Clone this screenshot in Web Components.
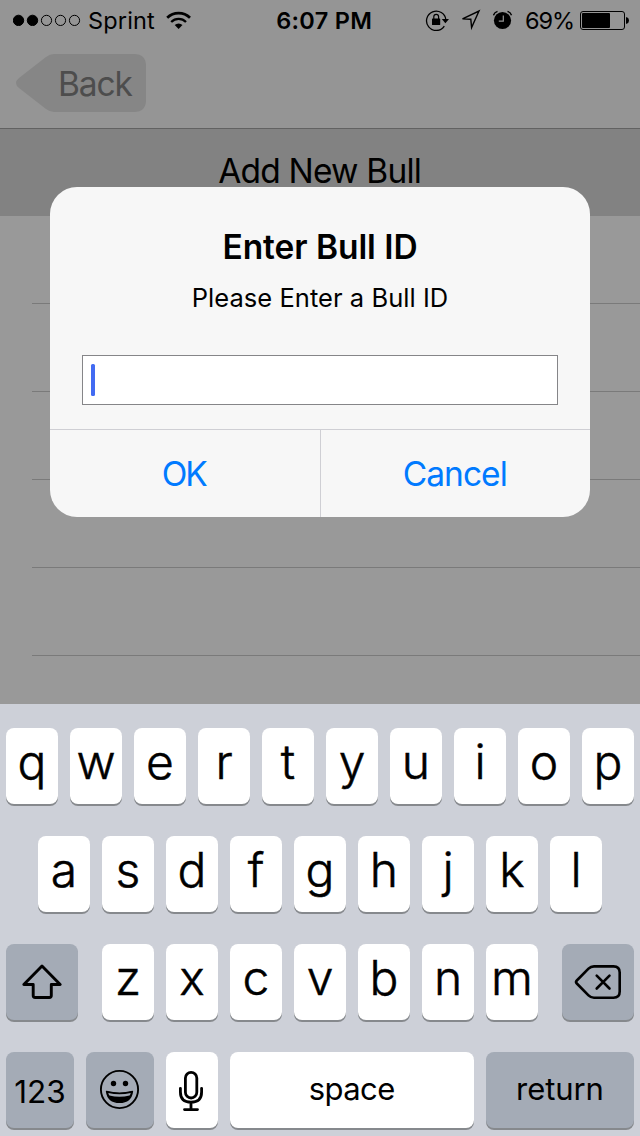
<!DOCTYPE html>
<html lang="en">
<head>
<meta charset="utf-8">
<title>Add New Bull</title>
<style>
html,body{margin:0;padding:0;background:#999}
body{width:640px;height:1136px;overflow:hidden;font-family:Inter,"Liberation Sans",sans-serif;color:#000}
</style>
</head>
<body>
<phone-screen></phone-screen>
<script>
const define = (name, html, setup) => customElements.define(name, class extends HTMLElement {
  connectedCallback() {
    if (this.shadowRoot) return;
    const root = this.attachShadow({mode: 'open'});
    const t = document.createElement('template');
    t.innerHTML = html;
    root.append(t.content.cloneNode(true));
    if (setup) setup(this, root);
  }
});
const ctx = document.createElement('canvas').getContext('2d');

// One line of text, tracked so that its glyphs span the requested width.
define('fit-text', `<style>
  :host{display:block;flex:none;white-space:nowrap;line-height:1.2}
  span{display:block}
</style><span><slot></slot></span>`, (el, root) => {
  const text = el.textContent, size = el.getAttribute('size'), weight = el.getAttribute('weight') || 400;
  const width = +el.getAttribute('width');
  el.style.fontSize = size + 'px';
  el.style.fontWeight = weight;
  if (!width || text.length < 2) return;
  ctx.font = `${weight} ${size}px Inter, "Liberation Sans", sans-serif`;
  const m = ctx.measureText(text);
  const gap = (width - m.actualBoundingBoxLeft - m.actualBoundingBoxRight) / (text.length - 1);
  el.style.letterSpacing = gap.toFixed(3) + 'px';
  root.querySelector('span').style.marginRight = (-gap).toFixed(3) + 'px';
});

define('signal-dots', `<style>:host{display:block;width:68px;height:12px}svg{display:block}</style>
<svg width="68" height="12"><g stroke="#000" stroke-width="1"><circle cx="5.500" cy="6.400" r="5.200"/><circle cx="19.500" cy="6.400" r="5.200"/><g fill="none"><circle cx="33.500" cy="6.400" r="5.100"/><circle cx="47.500" cy="6.400" r="5.100"/><circle cx="61.500" cy="6.400" r="5.100"/></g></g></svg>`);

define('wifi-icon', `<style>:host,svg{display:block}</style>
<svg width="26" height="20" viewBox="166 10 26 20"><path d="M178.600 29l-3.900-3.900a5.600 5.600 0 0 1 7.800 0z"/><g fill="none" stroke="#000"><path stroke-width="2.300" d="M171.200 22a10.500 10.500 0 0 1 14.800 0"/><path stroke-width="2.700" d="M167.200 17.800a16.200 16.200 0 0 1 22.800 0"/></g></svg>`);

define('lock-icon', `<style>:host,svg{display:block}</style>
<svg width="24" height="22" viewBox="424 9 24 22"><path d="M443.300 26.200A9.700 9.700 0 1 1 444.900 20" fill="none" stroke="#000" stroke-width="1.300"/><path d="M440.800 19.100h7.200l-3.600 4.200z"/><rect x="431" y="18.500" width="8.200" height="6.500" rx=".6"/><path d="M432.800 19v-2.200a2.400 2.400 0 0 1 4.800 0v2.200" fill="none" stroke="#000" stroke-width="1.200"/></svg>`);

define('location-icon', `<style>:host,svg{display:block}</style>
<svg width="21" height="22" viewBox="460 9 21 22"><path d="M462.500 18.900L479 11L471.600 27.500L470.800 19.200z" fill="none" stroke="#000" stroke-width="1.400" stroke-linejoin="miter"/></svg>`);

define('alarm-icon', `<style>:host,svg{display:block}</style>
<svg width="20" height="20" viewBox="493 10 20 20"><circle cx="502.500" cy="20.500" r="8.600"/><path d="M503.300 15.500v5.600h-4.500" fill="none" stroke="#959595" stroke-width="1.200"/><path d="M493.500 15.300q.8-3 4-4M511.500 15.300q-.8-3-4-4" fill="none" stroke="#000" stroke-width="1.400"/></svg>`);

define('battery-icon', `<style>:host,svg{display:block}</style>
<svg width="50" height="20" viewBox="580 10 50 20"><rect x="580.500" y="11.500" width="44" height="18" rx="2.500" fill="none" stroke="#000"/><rect x="582" y="13" width="28" height="15" rx="1"/><path d="M626 17.200h1q2 1 2 3.300t-2 3.300h-1z"/></svg>`);

define('status-bar', `<style>
  :host{display:flex;height:40px;align-items:center;padding:0 10px 0 13px;box-sizing:border-box}
  fit-text{padding-top:2px}
  .time{margin-left:84.500px}
  wifi-icon{margin-left:11px}
  signal-dots{margin-right:7px}
  lock-icon{margin-left:auto}
  location-icon{margin-left:11px}
  alarm-icon{margin:0 12px}
  battery-icon{margin-left:5px}
</style>
<signal-dots></signal-dots><fit-text size="23.500" width="66">Sprint</fit-text><wifi-icon></wifi-icon>
<fit-text class="time" size="23.500" weight="600" width="93">6:07 PM</fit-text>
<lock-icon></lock-icon><location-icon></location-icon><alarm-icon></alarm-icon><fit-text size="23.500" width="47">69%</fit-text><battery-icon></battery-icon>`);

define('back-button', `<style>
  :host{display:grid;width:130px;height:58px;color:#4d4d4d}
  svg,.label{grid-area:1/1}
  .label{padding:10px 0 0 42px}
</style>
<svg width="130" height="58"><path fill="#868686" d="M38 0H118Q130 0 130 12V46Q130 58 118 58H38Q34 58 30 55L3 34Q-3 29 3 24L30 3Q34 0 38 0Z"/></svg>
<div class="label"><fit-text size="33.500" width="72.500">Back</fit-text></div>`);

define('nav-bar', `<style>
  :host{display:block;height:129px;box-sizing:border-box;background:#959595;border-bottom:1px solid #626262}
  back-button{margin:14px 0 0 16px}
</style><status-bar></status-bar><back-button></back-button>`);

define('list-row', `<style>
  :host{display:block;height:88px;box-sizing:border-box;padding-left:32px}
  div{height:100%;box-sizing:border-box;border-bottom:1px solid #7a7a7a}
</style><div></div>`);

define('bull-list', `<style>
  :host{display:block}
  header{height:87px;display:flex;align-items:center;justify-content:center;background:#828282;padding-bottom:2px;box-sizing:border-box}
</style><header><fit-text size="33.500" width="201.500">Add New Bull</fit-text></header>
<list-row></list-row><list-row></list-row><list-row></list-row><list-row></list-row><list-row></list-row>`);

define('alert-button', `<style>
  :host{display:flex;flex:1;height:87px;align-items:center;justify-content:center;color:#007aff;padding-top:1px;box-sizing:border-box}
</style><slot></slot>`);

define('text-input', `<style>
  :host{display:flex;align-items:center;box-sizing:border-box;width:476px;height:50px;padding-left:8px;background:#fff;border:1px solid #858588}
  i{width:4px;height:32px;border-radius:1.500px;background:#426bf2}
</style><i></i>`);

define('alert-dialog', `<style>
  :host{display:flex;flex-direction:column;align-items:center;width:540px;height:330px;box-sizing:border-box;background:#f7f7f7;border-radius:27px;overflow:hidden}
  .title{margin-top:40px}
  .message{margin-top:16px}
  text-input{margin-top:auto}
  footer{display:flex;width:100%;margin-top:24px;border-top:1px solid #cfcfd4}
  alert-button+alert-button{border-left:1px solid #cfcfd4}
</style>
<fit-text class="title" size="33.500" weight="600" width="192">Enter Bull ID</fit-text>
<fit-text class="message" size="25.500" width="253">Please Enter a Bull ID</fit-text>
<text-input></text-input>
<footer><alert-button><fit-text size="33.500" width="44.500">OK</fit-text></alert-button><alert-button><fit-text size="33.500" width="102">Cancel</fit-text></alert-button></footer>`);

define('key-cap', `<style>
  :host{display:flex;flex:none;width:52px;height:76px;align-items:center;justify-content:center;background:#fff;border-radius:8px;box-shadow:0 2px 0 #86898d;box-sizing:border-box;font-size:48px;font-weight:300;-webkit-text-stroke:.5px #000;padding-bottom:9px;line-height:1.200}
  :host([kind]){padding-bottom:0;-webkit-text-stroke:0}
  :host([kind="dark"]){background:#a4abb6}
</style><slot></slot>`);

define('key-board', `<style>
  :host{display:flex;flex-direction:column;gap:32px;height:432px;box-sizing:border-box;padding:24px 6px 0;background:#cdd0d8}
  .row{display:flex;gap:12px;justify-content:center;height:76px}
  .wide{width:72px}.shift{margin-right:12px}.del{margin-left:12px}
  .mid{width:68px}.space{width:244px;padding-bottom:3px}.return{width:148px;padding-bottom:3px}
  .num{padding-top:3px}
  svg{display:block;flex:none}
</style>
<div class="row">${[...'qwertyuiop'].map(c => `<key-cap>${c}</key-cap>`).join('')}</div>
<div class="row">${[...'asdfghjkl'].map(c => `<key-cap>${c}</key-cap>`).join('')}</div>
<div class="row"><key-cap kind="dark" class="wide shift"><svg width="72" height="76" viewBox="6 944 72 76"><path d="M42 966L60.200 984.500H51.300V995.500Q51.300 997.500 49.300 997.500H35.200Q33.200 997.500 33.200 995.500V984.500H23.800Z" fill="none" stroke="#000" stroke-width="2.900" stroke-linejoin="round"/></svg></key-cap>${[...'zxcvbnm'].map(c => `<key-cap>${c}</key-cap>`).join('')}<key-cap kind="dark" class="wide del"><svg width="72" height="76" viewBox="562 944 72 76"><g fill="none" stroke="#000" stroke-width="2.600" stroke-linecap="round" stroke-linejoin="round"><path d="M576.800 980.500L588.500 968.700Q590.800 966.400 594 966.400H613.500Q619.700 966.400 619.700 972.600V991.500Q619.700 997.700 613.500 997.700H594Q590.800 997.700 588.500 995.400L576.800 983.500Q575.300 982 576.800 980.500Z"/><path d="M596.700 975.700L609.500 988.500M609.500 975.700L596.700 988.500"/></g></svg></key-cap></div>
<div class="row"><key-cap kind="dark" class="mid num"><fit-text size="31.500" width="49">123</fit-text></key-cap><key-cap kind="dark" class="mid"><svg width="68" height="76" viewBox="86 1052 68 76"><circle cx="119.500" cy="1089.500" r="18.600" fill="none" stroke="#000" stroke-width="1.900"/><circle cx="113.500" cy="1083.500" r="2.700"/><circle cx="125.500" cy="1083.500" r="2.700"/><path d="M106.500 1091.300Q119.500 1094.800 132.500 1091.300Q131 1102.300 119.500 1102.300Q108 1102.300 106.500 1091.300Z" stroke="#000" stroke-width="1.300" stroke-linejoin="round"/><path d="M108.300 1092.900Q119.500 1095.700 130.700 1092.900Q130.300 1094.600 129.600 1095.600Q119.500 1098 109.400 1095.600Q108.700 1094.600 108.300 1092.900Z" fill="#a4abb6"/></svg></key-cap><key-cap kind="light"><svg width="52" height="76" viewBox="166 1052 52 76"><g fill="none" stroke="#000" stroke-width="2.800" stroke-linecap="round"><rect x="185.400" y="1072.400" width="11.400" height="25.600" rx="5.700"/><path d="M180.400 1088.300V1092Q180.400 1102.200 191 1102.200Q201.600 1102.200 201.600 1092V1088.300M191 1102.200V1109.600M184.500 1109.600H197.500"/></g></svg></key-cap><key-cap kind="light" class="space"><fit-text size="31" width="84.500">space</fit-text></key-cap><key-cap kind="dark" class="return"><fit-text size="31" width="83.500">return</fit-text></key-cap></div>`);

define('phone-screen', `<style>
  :host{display:flex;flex-direction:column;position:relative;width:640px;height:1136px;background:#999;overflow:hidden}
  key-board{margin-top:auto}
  alert-dialog{position:absolute;left:50px;top:187px}
</style><nav-bar></nav-bar><bull-list></bull-list><key-board></key-board><alert-dialog></alert-dialog>`);
</script>
</body>
</html>
